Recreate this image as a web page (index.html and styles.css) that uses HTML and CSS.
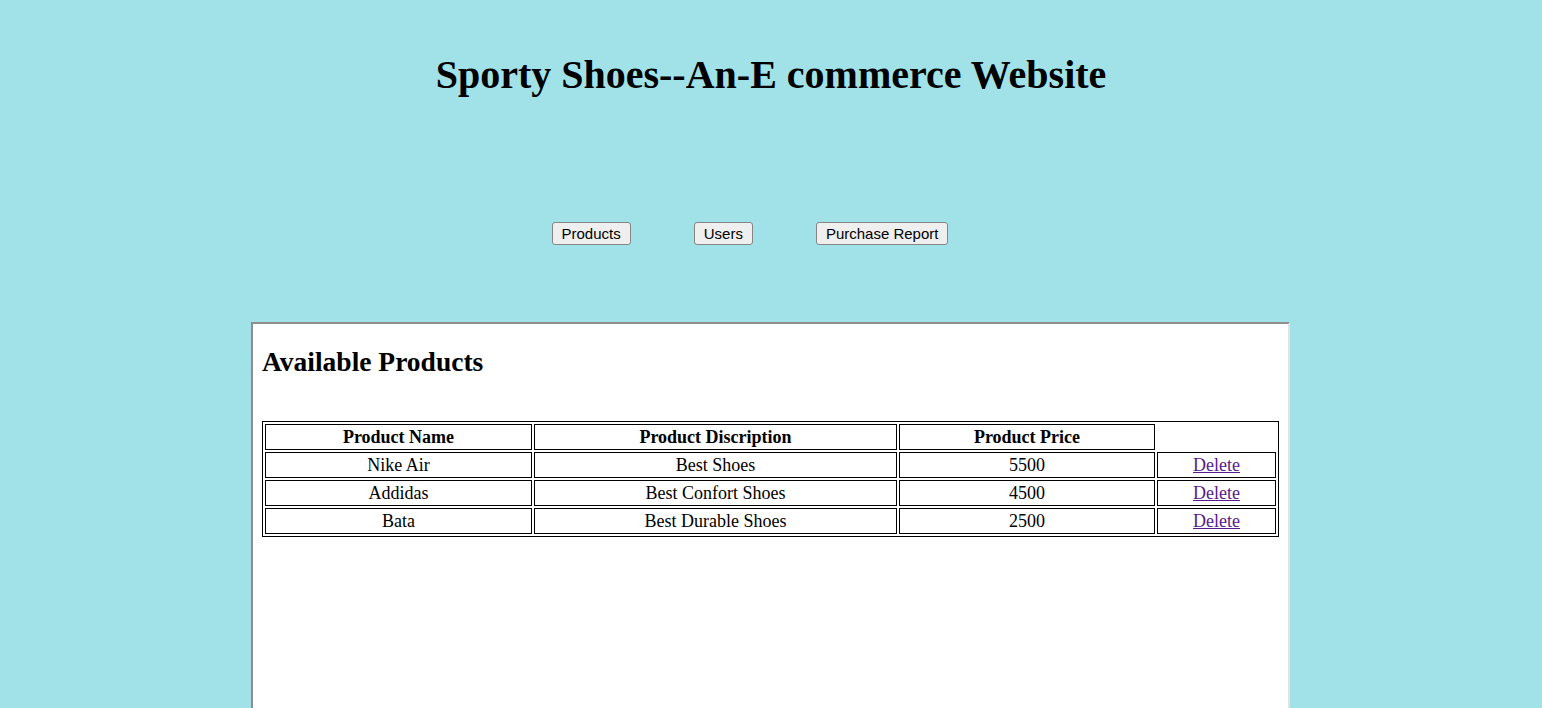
FILE: index.html
```html
<!DOCTYPE html>
<html lang="en">
<head>
<meta charset="utf-8">
<title>Sporty Shoes</title>
<link rel="stylesheet" href="styles.css">
</head>
<body>
<h1 class="title">Sporty Shoes--An-E commerce Website</h1>
<div class="nav">
  <button class="btn" type="button">Products</button>
  <button class="btn" type="button">Users</button>
  <button class="btn" type="button">Purchase Report</button>
</div>
<div class="frame">
  <h2 class="heading">Available Products</h2>
  <table class="products">
    <tr>
      <th class="c1">Product Name</th>
      <th class="c2">Product Discription</th>
      <th class="c3">Product Price</th>
    </tr>
    <tr>
      <td class="c1">Nike Air</td>
      <td class="c2">Best Shoes</td>
      <td class="c3">5500</td>
      <td class="c4"><a class="link" href="#">Delete</a></td>
    </tr>
    <tr>
      <td>Addidas</td>
      <td>Best Confort Shoes</td>
      <td>4500</td>
      <td><a class="link" href="#">Delete</a></td>
    </tr>
    <tr>
      <td>Bata</td>
      <td>Best Durable Shoes</td>
      <td>2500</td>
      <td><a class="link" href="#">Delete</a></td>
    </tr>
  </table>
</div>
</body>
</html>
```
FILE: styles.css
```css
html, body {
  margin: 0;
  padding: 0;
  overflow: hidden;
  height: 100%;
}
body {
  background: #a0e2e8;
  font-family: "Liberation Serif", "Times New Roman", serif;
  color: #000;
}
.title {
  margin: 52px 0 0;
  font-size: 40px;
  line-height: 46px;
  font-weight: bold;
  text-align: center;
}
.nav {
  margin-top: 124px;
  display: flex;
  justify-content: center;
  gap: 63px;
  padding-right: 42px;
}
.btn {
  font-family: "Liberation Sans", Arial, sans-serif;
  font-size: 15px;
  line-height: 17px;
  padding: 2px 9px;
  margin: 0;
  color: #000;
  background: #efefef;
  border: 1px solid #858585;
  border-radius: 3px;
}
.frame {
  width: 1017px;
  height: 500px;
  margin: 77px 0 0 calc(50% - 520px);
  background: #fff;
  padding: 9px;
  border-style: solid;
  border-width: 2px;
  border-color: #8e8e8e #e2e2e2 #e2e2e2 #8e8e8e;
}
.heading {
  margin: 13px 0 0;
  font-size: 27.5px;
  line-height: 31px;
  font-weight: bold;
}
.products {
  margin-top: 44px;
  border: 1px solid #000;
  border-collapse: separate;
  border-spacing: 2px;
  font-size: 18px;
}
.products th,
.products td {
  border: 1px solid #000;
  padding: 1px;
  line-height: 22px;
  text-align: center;
  font-weight: normal;
}
.products th {
  font-weight: bold;
}
.c1 { width: 263px; }
.c2 { width: 359px; }
.c3 { width: 252px; }
.c4 { width: 115px; }
.link {
  color: #551a8b;
  text-decoration: underline;
}
```
